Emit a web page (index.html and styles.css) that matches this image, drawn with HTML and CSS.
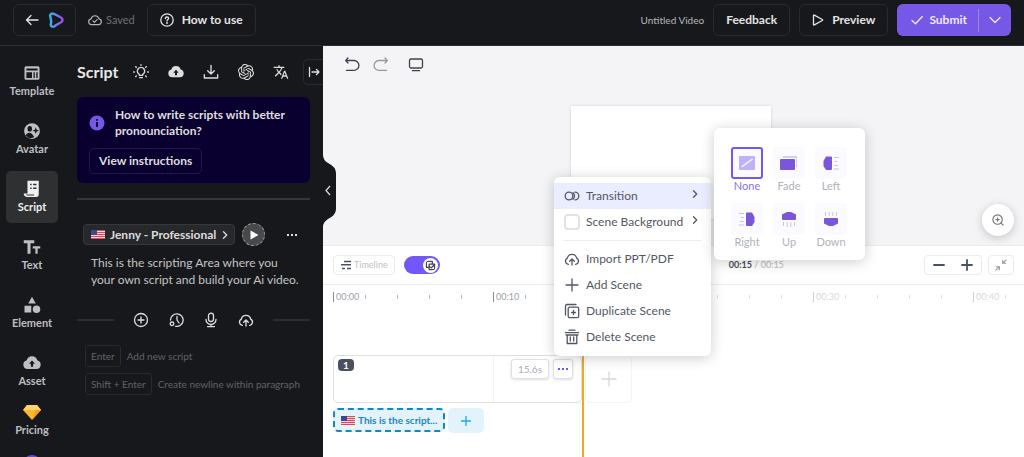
FILE: index.html
```html
<!DOCTYPE html>
<html lang="en">
<head>
<meta charset="utf-8">
<meta name="viewport" content="width=device-width, initial-scale=1">
<title>Untitled Video</title>
<link rel="stylesheet" href="styles.css">
</head>
<body>
<svg class="defs" aria-hidden="true">
  <defs>
    <linearGradient id="brand" x1="0" x2="1"><stop offset="0" stop-color="#35b4e8"/><stop offset=".55" stop-color="#6d7cf0"/><stop offset="1" stop-color="#a64be0"/></linearGradient>
    <symbol id="flag" viewBox="0 0 14 9"><path fill="#f3d5da" d="M0 0h14v9H0z"/><path stroke="#d9485b" d="M0 .5h14M0 2.5h14M0 4.5h14M0 6.5h14M0 8.5h14"/><path fill="#3c4a8c" d="M0 0h6v5H0z"/></symbol>
    <symbol id="cloud-up" viewBox="0 0 24 24"><path fill="none" stroke="currentColor" stroke-width="2" stroke-linecap="round" stroke-linejoin="round" d="M6.500 20A5 5 0 0 1 5 10.600a7.200 7.200 0 0 1 14 0A5 5 0 0 1 17.500 20M12 21v-8.500m-3.500 3L12 12l3.500 3.500"/></symbol>
    <symbol id="cloud-solid" viewBox="0 0 24 24"><path fill="currentColor" fill-rule="evenodd" d="M6 20a6 6 0 0 1-1-11.800 7.300 7.300 0 0 1 14 0A6 6 0 0 1 18 20zm4.500-3h3v-4H16l-4-4.500L8 13h2.500z"/></symbol>
  </defs>
</svg>

<header class="topbar">
  <button class="btn back" aria-label="Back">
    <svg class="i14" viewBox="0 0 14 14"><path class="ln" d="M13 7H1.500M6 2.500 1.500 7 6 11.500"/></svg>
    <svg class="i16" viewBox="0 0 16 16"><path fill="none" stroke="url(#brand)" stroke-width="2.400" stroke-linejoin="round" d="M2.300 4.500C1.600 1.800 4.300.700 6.200 2.200l1.600.500 4.800 2.600c2.600 1.300 2.600 4 .1 5.200L8.200 13l-1.600 1.200c-1.900 1.200-4.200.2-3.800-2.200L3.300 10l-.5-3z"/></svg>
  </button>
  <span class="saved"><svg class="i14" viewBox="0 0 24 24"><path fill="none" stroke="currentColor" stroke-width="2" stroke-linecap="round" stroke-linejoin="round" d="M6 20a5 5 0 0 1-.8-9.900 7 7 0 0 1 13.600 0A5 5 0 0 1 18 20zM8.500 13.500l2.500 2.500 4.500-4.500"/></svg>Saved</span>
  <button class="btn"><svg class="i14" viewBox="0 0 14 14"><circle class="ln" cx="7" cy="7" r="6.200"/><path class="ln" d="M5.300 5.600C5.400 3.400 8.700 3.500 8.600 5.500 8.500 6.600 7 6.700 7 8"/><circle cx="7" cy="10" r=".9" fill="currentColor"/></svg>How to use</button>
  <span class="title">Untitled Video</span>
  <button class="btn action">Feedback</button>
  <button class="btn action"><svg class="i12" viewBox="0 0 12 12"><path class="ln" d="M1.500 1.500v9q0 .8.800.400l8-4.400q.700-.5 0-1l-8-4.400q-.8-.4-.8.400z"/></svg>Preview</button>
  <div class="submit">
    <button class="submit-main"><svg class="i12" viewBox="0 0 12 12"><path class="ln" d="m1 6.500 3.500 3.300L11.300 2.500"/></svg>Submit</button>
    <button class="submit-more" aria-label="More submit options"><svg class="i12" viewBox="0 0 12 12"><path class="ln" d="m1 3.500 5 5 5-5"/></svg></button>
  </div>
</header>

<div class="workspace">
  <nav class="rail">
    <button class="rail-item"><svg class="i18" viewBox="0 0 24 24"><path fill="currentColor" fill-rule="evenodd" d="M4 3h16a2 2 0 0 1 2 2v14a2 2 0 0 1-2 2H4a2 2 0 0 1-2-2V5a2 2 0 0 1 2-2zm.5 3v2.500h15V6zm0 5v7.500H12V11zm9.500 0v7.500h1.700V11zm3.700 0v7.500h1.800V11z"/></svg>Template</button>
    <button class="rail-item"><svg class="i20" viewBox="0 0 24 24"><circle cx="12" cy="12" r="10.500" fill="currentColor"/><g fill="#17181b"><ellipse cx="9" cy="9" rx="3" ry="3.800"/><path d="M3.500 17.500c3-5 8-4.500 11.500 2.500q-6 4-11.500-2.500zM17 7l1.200 3.300 3.300 1.200-3.300 1.200L17 16l-1.200-3.300-3.300-1.200 3.300-1.200z"/></g></svg>Avatar</button>
    <button class="rail-item active" aria-current="page"><svg class="i18" viewBox="0 0 24 24"><path fill="currentColor" fill-rule="evenodd" d="M6 1h15v18a3.500 3.500 0 0 1-3.500 3.500H5A4 4 0 0 1 1 18h5zm3.500 4v2h2V5zm4 0v2H18V5zm-4 5v2h2v-2zm4 0v2H18v-2zM4 19.200q.5 1.300 2 1.300h9.300q-.8-.5-.8-1.300z"/></svg>Script</button>
    <button class="rail-item"><svg class="i18" viewBox="0 0 24 24"><path fill="currentColor" d="M1 3h14v4h-5v14H6V7H1zM13 11h10v3h-3.500v7h-3v-7H13z"/></svg>Text</button>
    <button class="rail-item"><svg class="i18" viewBox="0 0 24 24"><path fill="currentColor" d="m12 1 5 9H7zM2 13h9v9H2z"/><circle cx="18" cy="17.500" r="5" fill="currentColor"/></svg>Element</button>
    <button class="rail-item"><svg class="i20" viewBox="0 0 24 24"><use href="#cloud-solid"/></svg>Asset</button>
    <button class="rail-item tight"><svg class="i18" viewBox="0 0 18 16"><path fill="#fdb62f" d="M4 1h10l4 5-9 10L0 6z"/><path fill="#ffd36a" d="M4 1h10l4 5H0z"/><path fill="#f79a22" d="m9 16 4-10h5z"/></svg>Pricing</button>
    <button class="help" aria-label="Help"></button>
  </nav>

  <aside class="panel">
    <div class="panel-head">
      <h1>Script</h1>
      <div class="tools">
        <button aria-label="Ideas"><svg class="i16" viewBox="0 0 24 24"><path class="ln2" d="M9.500 17v-1.500a5.500 5.500 0 1 1 5 0V17zM10 20.500h4M12 1v1M4 4l1 1M20 4l-1 1M1 12h1M23 12h-1M4 19l1-1M20 19l-1-1"/></svg></button>
        <button aria-label="Upload"><svg class="i16" viewBox="0 0 24 24"><use href="#cloud-solid"/></svg></button>
        <button aria-label="Download"><svg class="i16" viewBox="0 0 24 24"><path class="ln2" d="M12 2v13m-5-5 5 5 5-5M2 16v5h20v-5"/></svg></button>
        <button aria-label="Generate"><svg class="i16" viewBox="0 0 24 24"><path fill="currentColor" d="M22.282 9.821a5.985 5.985 0 0 0-.516-4.910 6.046 6.046 0 0 0-6.510-2.900A6.065 6.065 0 0 0 4.981 4.182a5.985 5.985 0 0 0-3.998 2.900 6.046 6.046 0 0 0 .743 7.097 5.980 5.980 0 0 0 .511 4.911 6.051 6.051 0 0 0 6.515 2.900A5.985 5.985 0 0 0 13.260 24a6.056 6.056 0 0 0 5.772-4.206 5.989 5.989 0 0 0 3.998-2.900 6.056 6.056 0 0 0-.748-7.073zM13.260 22.430a4.476 4.476 0 0 1-2.876-1.041l.142-.080 4.778-2.758a.795.795 0 0 0 .393-.681v-6.737l2.020 1.169a.071.071 0 0 1 .038.052v5.583a4.504 4.504 0 0 1-4.495 4.494zM3.599 18.304a4.471 4.471 0 0 1-.535-3.014l.142.085 4.783 2.758a.771.771 0 0 0 .781 0l5.843-3.369v2.333a.080.080 0 0 1-.033.062L9.740 19.950a4.499 4.499 0 0 1-6.141-1.646zM2.341 7.896a4.485 4.485 0 0 1 2.366-1.973V11.600a.766.766 0 0 0 .388.677l5.814 3.354-2.020 1.169a.076.076 0 0 1-.071 0l-4.830-2.787A4.504 4.504 0 0 1 2.341 7.872zm16.596 3.856L13.104 8.364 15.119 7.200a.076.076 0 0 1 .071 0l4.830 2.791a4.494 4.494 0 0 1-.677 8.104v-5.677a.790.790 0 0 0-.407-.667zm2.011-3.023-.142-.085-4.774-2.782a.776.776 0 0 0-.785 0L9.409 9.230V6.897a.066.066 0 0 1 .028-.062l4.830-2.787a4.499 4.499 0 0 1 6.680 4.660zM8.307 12.863l-2.020-1.164a.080.080 0 0 1-.038-.057V6.074a4.499 4.499 0 0 1 7.376-3.454l-.142.081L8.704 5.459a.795.795 0 0 0-.393.681zm1.098-2.365 2.602-1.500 2.607 1.500v2.999l-2.597 1.500-2.607-1.500z"/></svg></button>
        <button aria-label="Translate"><svg class="i16" viewBox="0 0 24 24"><path fill="currentColor" d="m12.870 15.070-2.540-2.510.030-.030A17.520 17.520 0 0 0 14.070 6H17V4h-7V2H8v2H1v2h11.170A15 15 0 0 1 9 11.350 14 14 0 0 1 6.690 8h-2a16 16 0 0 0 2.980 4.560l-5.090 5.020L4 19l5-5 3.110 3.110zM18.500 10h-2L12 22h2l1.120-3h4.750L21 22h2zm-2.620 7 1.620-4.330L19.120 17z"/></svg></button>
      </div>
      <button class="collapse" aria-label="Collapse panel"><svg class="i12" viewBox="0 0 12 12"><path class="ln" d="M1.500 1.500v9M4 6h7M8.500 3.500 11 6 8.500 8.500"/></svg></button>
    </div>

    <section class="notice">
      <svg class="i16" viewBox="0 0 16 16"><circle cx="8" cy="8" r="7.500" fill="#7559e6"/><path fill="#0a0030" d="M7.100 7h1.800v5H7.100zM7.100 4h1.800v1.800H7.100z"/></svg>
      <p>How to write scripts with better pronounciation?</p>
      <button>View instructions</button>
    </section>

    <hr>

    <div class="voice">
      <button class="chip"><svg class="flag"><use href="#flag"/></svg>Jenny - Professional<svg class="i8" viewBox="0 0 8 8"><path class="ln" d="m2.500.8 3.200 3.200-3.200 3.200"/></svg></button>
      <button class="play" aria-label="Play"><svg class="i10" viewBox="0 0 10 10"><path fill="#fff" d="m1.500.5 8 4.500-8 4.500z"/></svg></button>
      <button class="dots" aria-label="More"><svg class="i10" viewBox="0 0 10 10"><path fill="currentColor" d="M0 4h2v2H0zM4 4h2v2H4zM8 4h2v2H8z"/></svg></button>
    </div>
    <textarea class="script" rows="2" aria-label="Script text">This is the scripting Area where you
your own script and build your Ai video.</textarea>

    <div class="insert">
      <button aria-label="Add"><svg class="i16" viewBox="0 0 16 16"><path class="ln" d="M8 5v6M5 8h6"/><circle class="ln" cx="8" cy="8" r="6.500"/></svg></button>
      <button aria-label="Pause"><svg class="i16" viewBox="0 0 16 16"><path class="ln" d="M2.500 8a6.300 6.300 0 1 1 5 6.300M9 4.500V8l2 3"/><circle class="ln" cx="4" cy="11.800" r="1.800"/></svg></button>
      <button aria-label="Record"><svg class="i16" viewBox="0 0 16 16"><rect class="ln" x="5.500" y="1.200" width="5" height="8.300" rx="2.500"/><path class="ln" d="M3 7.500a5 5 0 0 0 10 0M8 12.500v2M4.500 14.600h7"/></svg></button>
      <button aria-label="Upload audio"><svg class="i16" viewBox="0 0 24 24"><use href="#cloud-up"/></svg></button>
    </div>

    <ul class="hints">
      <li><kbd>Enter</kbd>Add new script</li>
      <li><kbd>Shift + Enter</kbd>Create newline within paragraph</li>
    </ul>
    <button class="tab" aria-label="Hide panel">
      <svg viewBox="0 0 13 72"><path fill="#17181b" d="M0 0q0 5 5 8 8 4 8 10v36q0 6-8 10-5 3-5 8z"/><path fill="none" stroke="#ddd" stroke-width="1.200" d="m7 31-4 4.500 4 4.500"/></svg>
    </button>
  </aside>

  <main class="stage">
    <section class="preview">
      <div class="history">
        <button aria-label="Undo"><svg class="i16" viewBox="0 0 16 16"><path class="ln" d="M2 3.500h8a4.600 4.600 0 0 1 0 9.800H2.500M4 1 1.700 3.500 4 6"/></svg></button>
        <button class="muted" aria-label="Redo"><svg class="i16" viewBox="0 0 16 16"><path class="ln" d="M14 3.500H6a4.600 4.600 0 0 0 0 9.800h7.500M12 1l2.300 2.500L12 6"/></svg></button>
        <button class="screen" aria-label="Screen size"><svg class="i16" viewBox="0 0 16 16"><rect class="ln" x="1.500" y="2" width="13" height="9" rx="1.500"/><path class="ln" d="M4.500 13.700h7"/></svg></button>
      </div>
      <div class="canvas"></div>
      <button class="zoom" aria-label="Zoom"><svg class="i12" viewBox="0 0 14 14"><circle class="ln" cx="6.500" cy="6.500" r="5.500"/><path class="ln" d="M6.500 4.500v4M4.500 6.500h4M10.500 10.500l2.500 2.500"/></svg></button>
    </section>

    <section class="controls">
      <button class="box timeline"><svg class="i12" viewBox="0 0 12 12"><path fill="none" stroke="#4b5060" stroke-width="1.400" d="M4 2.500h7M1 5.700h10M2 9.500h3M7 9.500h4"/></svg>Timeline</button>
      <label class="switch"><input type="checkbox" checked aria-label="Scene mode"><svg class="i12" viewBox="0 0 12 12"><path class="ln" d="M4 8H1.500V1.500H8V4M4.500 4.500h6v6h-6zM5.500 7.500 7 8.500l3-3"/></svg></label>
      <span class="time"><b>00:15</b> / 00:15</span>
      <div class="box scale">
        <button aria-label="Zoom out"><svg class="i12" viewBox="0 0 12 12"><path class="ln" d="M1 6h10"/></svg></button>
        <button aria-label="Zoom in"><svg class="i12" viewBox="0 0 12 12"><path class="ln" d="M1 6h10M6 1v10"/></svg></button>
      </div>
      <button class="box fit" aria-label="Fit"><svg class="i12" viewBox="0 0 14 14"><path class="ln" d="m13 1-4 4M9 1.500V5h3.500M1 13l4-4M1.500 9H5v3.500"/></svg></button>
    </section>

    <section class="tracks">
      <div class="ruler">
        <div class="mark"><span>00:00</span><i></i><i></i><i></i><i></i></div>
        <div class="mark"><span>00:10</span><i></i><i></i><i></i><i></i></div>
        <div class="mark faint"><span>00:20</span><i></i><i></i><i></i><i></i></div>
        <div class="mark faint"><span>00:30</span><i></i><i></i><i></i><i></i></div>
        <div class="mark faint"><span>00:40</span><i></i></div>
      </div>
      <div class="scenes">
        <article class="scene">
          <span class="num">1</span>
          <span class="len">15.6s</span>
          <button class="scene-more" aria-label="Scene menu"><svg class="i10" viewBox="0 0 10 10"><path fill="currentColor" d="M0 4h2v2H0zM4 4h2v2H4zM8 4h2v2H8z"/></svg></button>
        </article>
        <button class="new-scene" aria-label="Add scene"><svg class="i16" viewBox="0 0 16 16"><path class="ln" d="M8 1v14M1 8h14"/></svg></button>
      </div>
      <div class="clips">
        <button class="clip"><svg class="flag"><use href="#flag"/></svg>This is the script...</button>
        <button class="new-clip" aria-label="Add clip"><svg class="i10" viewBox="0 0 10 10"><path class="ln" d="M5 .5v9M.5 5h9"/></svg></button>
      </div>
      <div class="playhead"></div>
    </section>

    <div class="menu">
      <button class="row selected"><svg class="i16" viewBox="0 0 16 16"><circle class="ln" cx="5" cy="8" r="3.800"/><path class="ln" d="M9 4.800q3 3.200 0 6.400M11 4.200a3.800 3.800 0 0 1 0 7.600"/></svg>Transition<svg class="i8 arrow" viewBox="0 0 8 8"><path class="ln" d="m2.500.8 3.200 3.200-3.200 3.200"/></svg></button>
      <button class="row"><span class="swatch"></span>Scene Background<svg class="i8 arrow" viewBox="0 0 8 8"><path class="ln" d="m2.500.8 3.200 3.200-3.200 3.200"/></svg></button>
      <hr>
      <button class="row"><svg class="i16" viewBox="0 0 24 24"><use href="#cloud-up"/></svg>Import PPT/PDF</button>
      <button class="row"><svg class="i16" viewBox="0 0 16 16"><path class="ln" d="M8 2v12M2 8h12"/></svg>Add Scene</button>
      <button class="row"><svg class="i16" viewBox="0 0 16 16"><rect class="ln" x="4.200" y="4.200" width="10.500" height="10.500" rx="1.500"/><path class="ln" d="M1.500 12V3q0-1.500 1.500-1.500h9M9.500 7.500v4M7.500 9.500h4"/></svg>Duplicate Scene</button>
      <button class="row"><svg class="i16" viewBox="0 0 16 16"><path class="ln" d="M5 1.200h6M1.500 3.700h13M3.200 6v8.500h9.600V6M2 6h12M6.300 8v4M9.700 8v4"/></svg>Delete Scene</button>
    </div>

    <div class="transitions">
      <button class="tr on"><svg viewBox="0 0 32 32"><rect x="8" y="9" width="16" height="14" rx="1" fill="#bfb2fb"/><path stroke="#fff" stroke-width="1.200" d="m10.500 20 11-8"/></svg>None</button>
      <button class="tr"><svg viewBox="0 0 32 32"><path fill="#d5d0ea" d="M10 9h14v11H10z"/><path fill="#fbfaff" d="M7 11h16v13H7z"/><rect x="7" y="12" width="15" height="11" rx="1" fill="#7a57da"/></svg>Fade</button>
      <button class="tr"><svg viewBox="0 0 32 32"><path fill="#7a57da" d="M11 9.500h5q1 0 1 1v11.500q0 1-1 1h-5L8.500 19v-5z"/><path stroke="#cbc3ea" d="M19 10.500h5M19 14.500h3M19 18.500h4M19 22h5"/></svg>Left</button>
      <button class="tr"><svg viewBox="0 0 32 32"><path fill="#7a57da" d="M21 9.500h-5q-1 0-1 1v11.500q0 1 1 1h5l2.500-4v-5z"/><path stroke="#cbc3ea" d="M13 10.500H8M13 14.500h-3M13 18.500H9M13 22H8"/></svg>Right</button>
      <button class="tr"><svg viewBox="0 0 32 32"><path fill="#7a57da" d="M9 11.500 14 9h4l5 2.500V16q0 1-1 1H10q-1 0-1-1z"/><path stroke="#cbc3ea" d="M10.500 19v4M14.200 19v5M17.800 19v5M21.500 19v4"/></svg>Up</button>
      <button class="tr"><svg viewBox="0 0 32 32"><path fill="#7a57da" d="m9 20.500 5 2.500h4l5-2.500V16q0-1-1-1H10q-1 0-1 1z"/><path stroke="#cbc3ea" d="M10.500 13V9M14.200 13V9M17.800 13V9M21.500 13V9"/></svg>Down</button>
    </div>
  </main>
</div>
</body>
</html>
```
FILE: styles.css
```css
* { box-sizing: border-box; }
body, h1, p, ul { margin: 0; padding: 0; }
body {
  height: 100vh;
  display: flex;
  flex-direction: column;
  overflow: hidden;
  background: #17181b;
  color: #dedede;
  font: 12px/16px Lato, "Open Sans", sans-serif;
}
button { font: inherit; color: inherit; background: none; border: 0; padding: 0; }
button, .saved { display: flex; align-items: center; justify-content: center; }
svg { display: block; flex: none; }
.defs { position: absolute; width: 0; height: 0; }
.ln { fill: none; stroke: currentColor; stroke-width: 1.3; stroke-linecap: round; stroke-linejoin: round; }
.ln2 { fill: none; stroke: currentColor; stroke-width: 2; stroke-linecap: round; stroke-linejoin: round; }
.i8 { width: 8px; height: 8px; }
.i10 { width: 10px; height: 10px; }
.i12 { width: 12px; height: 12px; }
.i14 { width: 14px; height: 14px; }
.i16 { width: 16px; height: 16px; }
.i18 { width: 18px; height: 18px; }
.i20 { width: 20px; height: 20px; }
.flag { width: 14px; height: 9px; }

/* Top bar */
.topbar {
  flex: none;
  display: flex;
  align-items: center;
  padding: 4px 13px 9px;
  border-bottom: 1px solid #2c2d30;
}
.btn {
  height: 32px;
  padding: 0 12px;
  gap: 8px;
  border: 1px solid #292a2d;
  border-radius: 6px;
  font-weight: 700;
  color: #e4e4e4;
}
.back { gap: 9px; padding: 0 11px; }
.saved { gap: 4px; margin: 0 12px; font-size: 11px; color: #6f7073; }
.saved svg { color: #b5b5b5; }
.title { margin-left: auto; font-size: 10px; color: #b8b8b8; }
.action { margin-left: 9px; }
.submit { display: flex; align-items: center; height: 32px; margin-left: 9px; border-radius: 6px; background: #7559e6; color: #eeeaff; font-weight: 700; }
.submit-main { gap: 6px; padding: 0 11px 0 14px; }
.submit-more { height: 23px; padding: 0 10px; border-left: 1px solid #9a86ee; }

/* Layout */
.workspace { flex: 1; min-height: 0; display: flex; }
.rail { flex: none; width: 64px; padding: 9px 6px 0; overflow: hidden; display: flex; flex-direction: column; gap: 6px; }
.rail-item {
  flex: none;
  height: 52px;
  flex-direction: column;
  gap: 1px;
  border-radius: 5px;
  font-size: 11px;
  font-weight: 700;
  color: #bebfc1;
}
.rail-item svg { height: 18px; }
.rail-item.active { background: #2e3032; color: #f0f0f0; }
.rail-item.tight { height: 46px; margin-top: -6px; }
.help { flex: none; align-self: center; width: 18px; height: 18px; border-radius: 50%; background: #6748e0; margin-top: 6px; }

.panel { flex: none; width: 259px; padding: 13px 13px 0; position: relative; display: flex; flex-direction: column; }
.panel hr { width: 100%; margin: 15px 0 0; border: 0; border-top: 2px solid #35363a; }
.panel-head { display: flex; align-items: center; justify-content: space-between; height: 26px; margin-right: -13px; }
h1 { font-size: 16px; line-height: 20px; color: #e8e8e8; }
.tools { display: flex; gap: 19px; }
.collapse { width: 20px; height: 26px; border: 1px solid #292a2d; border-right: 0; border-radius: 5px 0 0 5px; }

.notice {
  margin-top: 12px;
  padding: 10px 12px 9px;
  display: grid;
  grid-template-columns: 16px 1fr;
  column-gap: 10px;
  row-gap: 9px;
  align-items: center;
  border-radius: 6px;
  background: #0a0030;
  font-weight: 700;
}
.notice button { grid-column: 1 / -1; justify-self: start; height: 26px; padding: 0 9px; border: 1px solid #201a48; border-radius: 5px; }
.voice { display: flex; align-items: center; margin: 23px 13px 0 6px; }
.chip { height: 21px; padding: 0 5px 0 7px; gap: 5px; border: 1px solid #37383c; border-radius: 4px; background: #27282b; font-weight: 700; }
.play { width: 23px; height: 23px; margin-left: 7px; border: 1px dashed #97979a; border-radius: 50%; background: #48494b; }
.dots { margin-left: auto; }
.script {
  display: block;
  margin: 8px 0 0;
  padding: 0 0 0 14px;
  border: 0;
  resize: none;
  overflow: hidden;
  background: none;
  color: #c4c4c4;
  font: 12px/17px Lato, "Open Sans", sans-serif;
}
.insert { display: flex; align-items: center; gap: 19px; margin-top: 24px; }
.insert::before, .insert::after { content: ""; flex: 1; height: 2px; background: #2c2d30; }
.hints { list-style: none; margin: 17px 0 0 8px; display: grid; gap: 6px; font-size: 10px; color: #626366; white-space: nowrap; }
.hints li { display: flex; align-items: center; gap: 6px; }
kbd { height: 22px; padding: 2px 5px; border: 1px solid #292a2d; border-radius: 3px; font: inherit; }
.tab { position: absolute; z-index: 3; top: 109px; left: 100%; width: 13px; height: 72px; }
.tab svg { width: 13px; height: 72px; }

/* Stage */
.stage { flex: 1; min-width: 0; position: relative; display: flex; flex-direction: column; background: #fff; color: #525763; }
.preview { position: relative; height: 200px; padding: 11px 26px 28px 21px; display: flex; flex-direction: column; background: #f4f4f6; border-bottom: 1px solid #ececee; }
.history { display: flex; gap: 13px; color: #3c4150; }
.history .muted { color: #9297a5; }
.history .screen { margin-left: 6px; }
.canvas { width: 200px; aspect-ratio: 16 / 9; margin: 33px auto 0; background: #fff; box-shadow: 0 0 3px #0002; }
.zoom { position: absolute; right: 10px; bottom: 9px; width: 32px; height: 32px; border-radius: 50%; background: #fff; color: #75777d; box-shadow: 0 2px 10px #0003; }
.controls { display: flex; align-items: center; height: 39px; padding: 0 10px; border-bottom: 1px solid #ececee; }
.box { height: 20px; border: 1px solid #ececef; border-radius: 4px; }
.timeline { padding: 0 6px; gap: 2px; font-size: 9px; color: #bfc0c8; }
.switch { position: relative; margin-left: 9px; }
.switch input { display: block; appearance: none; margin: 0; width: 36px; height: 18px; border-radius: 9px; background: #7357fa; }
.switch svg { position: absolute; right: 2px; top: 2px; width: 15px; height: 15px; padding: 2px; border-radius: 50%; background: #fff; color: #3f4452; }
.time { margin: 0 auto; padding-left: 149px; font-size: 9px; color: #b8bac0; }
.time b { color: #4a4e59; }
.scale { display: flex; align-items: center; gap: 16px; padding: 0 8px; color: #48506a; }
.scale .ln { stroke-width: 1.8; }
.fit { width: 26px; margin-left: 6px; color: #90959f; }
.tracks { position: relative; flex: 1; padding: 6px 0 0 10px; overflow: hidden; }
.ruler { display: flex; }
.mark { flex: none; width: 160px; height: 11px; display: grid; grid-template-columns: repeat(5, 32px); align-items: center; font-size: 9px; line-height: 10px; color: #9da1aa; }
.mark span { padding-left: 2px; border-left: 1px solid #858b98; white-space: nowrap; }
.mark i { width: 1px; height: 4px; background: #b5b8c0; }
.faint { opacity: .4; }
.scenes { display: flex; gap: 3px; margin-top: 53px; }
.scene { width: 249px; height: 48px; padding: 3px 8px 0 4px; display: flex; align-items: flex-start; border: 1px solid #dedfe3; border-radius: 5px; background: linear-gradient(90deg, transparent 159px, #f3f3f5 159px, #f3f3f5 160px, transparent 160px); }
.num { width: 16px; border-radius: 4px; background: #4a5060; color: #fff; font-size: 10px; line-height: 12px; font-weight: 700; text-align: center; }
.len, .scene-more { height: 20px; border: 1px solid #e0e0e4; border-radius: 3px; background: #fff; box-shadow: 0 1px 3px #0002; }
.len { margin-left: auto; padding: 1px 6px; font-size: 10px; color: #abacb2; }
.scene-more { width: 20px; margin-left: 4px; color: #7357fa; }
.new-scene { width: 47px; height: 48px; border: 1px solid #f5f5f7; border-radius: 5px; color: #d7d8dc; }
.clips { display: flex; gap: 3px; margin-top: 5px; }
.clip { height: 24px; padding: 0 6px; gap: 3px; border: 2px dashed #1187c9; border-radius: 5px; background: #e2f3fc; color: #2284c6; font-size: 10px; font-weight: 700; }
.new-clip { width: 36px; height: 25px; border-radius: 5px; background: #e2f3fc; color: #22a6ee; }
.playhead { position: absolute; top: 70px; bottom: 0; left: 259px; width: 2px; background: #f5a623; }

/* Popovers */
.menu, .transitions { position: absolute; z-index: 4; border-radius: 6px; background: #fff; box-shadow: 0 2px 14px #0003; }
.menu { left: 231px; top: 131px; width: 157px; padding: 6px 0; }
.menu hr { margin: 5px 10px; border: 0; border-top: 1px solid #ececee; }
.row { width: 100%; height: 26px; padding: 0 12px 0 10px; gap: 6px; justify-content: flex-start; }
.row.selected { background: #eaecff; }
.row .arrow { margin: 0 0 5px auto; }
.swatch { width: 16px; height: 16px; border: 2px solid #e3e3e6; border-radius: 4px; }
.transitions { left: 391px; top: 82px; padding: 19px 18px 11px 17px; display: grid; grid-template-columns: repeat(3, 32px); gap: 10px; }
.tr { flex-direction: column; font-size: 11px; line-height: 14px; color: #b1b2b8; }
.tr svg { width: 32px; height: 32px; border-radius: 3px; background: #fbfaff; }
.on { color: #8a72f2; }
.on svg { box-shadow: inset 0 0 0 2px #7357f6; }
```
